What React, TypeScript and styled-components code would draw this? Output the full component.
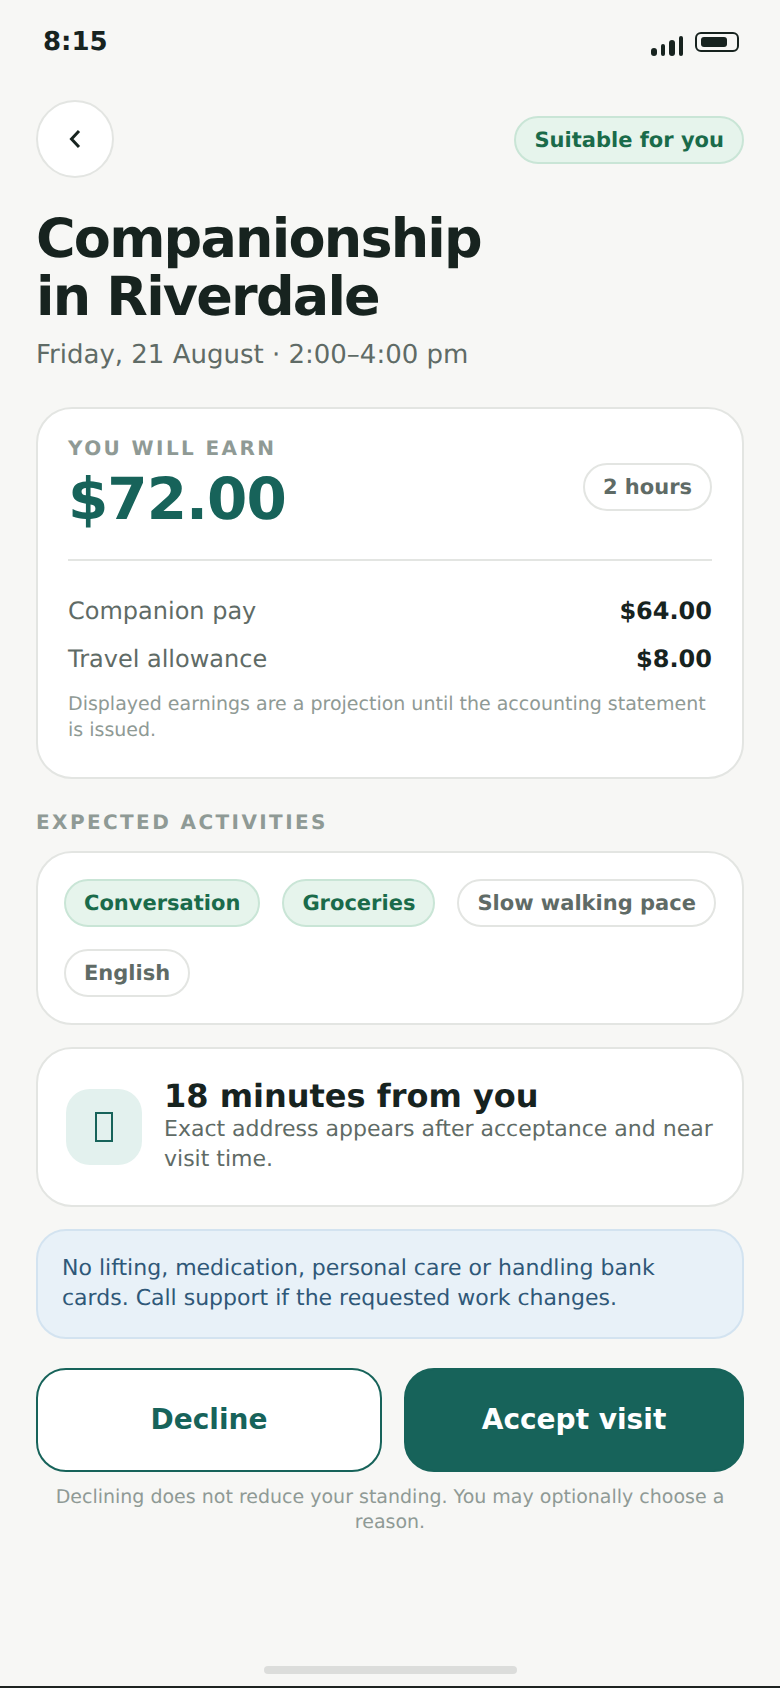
import React, { FC } from "react";
import styled, { createGlobalStyle } from "styled-components";

const GlobalStyle = createGlobalStyle`
  * {
    box-sizing: border-box;
  }
  html,
  body {
    margin: 0;
    padding: 0;
    background: #f7f7f5;
  }
  body {
    font-family: "DejaVu Sans", sans-serif;
    text-rendering: geometricPrecision;
  }
`;

const Screen = styled.div`
  width: 780px;
  height: 1688px;
  background: #f7f7f5;
  border-bottom: 2px solid #1e2321;
  display: flex;
  flex-direction: column;
  overflow: hidden;
`;

const StatusBar = styled.div`
  display: flex;
  justify-content: space-between;
  align-items: center;
  height: 82px;
  padding: 0 41px 0 43px;
`;
const Time = styled.div`
  padding-top: 2px;
  font-size: 26px;
  font-weight: 700;
  color: #17231f;
`;
const StatusIcons = styled.div`
  display: flex;
  align-items: center;
  gap: 12px;
  padding-top: 6px;
`;

const Content = styled.div`
  flex: 1;
  padding: 18px 36px 0;
  display: flex;
  flex-direction: column;
`;

const TopRow = styled.div`
  display: flex;
  justify-content: space-between;
  align-items: center;
`;
const BackButton = styled.button`
  width: 78px;
  height: 78px;
  border-radius: 50%;
  border: 2px solid #e3e5e2;
  background: #fff;
  padding: 0;
  display: flex;
  align-items: center;
  justify-content: center;
`;

interface PillProps {
  $tone: "green" | "plain";
}
const Pill = styled.span<PillProps>`
  display: inline-flex;
  align-items: center;
  height: 48px;
  padding: 0 18px 1px;
  border-radius: 24px;
  font-size: 21px;
  font-weight: 700;
  white-space: nowrap;
  color: ${(props) => (props.$tone === "green" ? "#1a6b4a" : "#5f6b66")};
  background: ${(props) => (props.$tone === "green" ? "#e6f4ec" : "#fff")};
  border: 2px solid
    ${(props) => (props.$tone === "green" ? "#c9e5d6" : "#e3e5e2")};
`;
const MatchPill = styled(Pill)`
  margin-top: 2px;
`;
const DurationPill = styled(Pill)`
  margin-top: 6px;
`;

const Title = styled.h1`
  margin: 32px 0 0;
  font-size: 54px;
  line-height: 58px;
  letter-spacing: -1.8px;
  font-weight: 700;
  color: #17231f;
`;
const Subtitle = styled.div`
  margin-top: 11px;
  font-size: 26px;
  line-height: 36px;
  color: #5f6b66;
`;

const Card = styled.section`
  background: #fff;
  border: 2px solid #e3e5e2;
  border-radius: 36px;
`;
const EarnCard = styled(Card)`
  margin-top: 34px;
  padding: 27px 30px 34px;
`;
const EarnHead = styled.div`
  display: flex;
  justify-content: space-between;
  align-items: center;
  padding-bottom: 27px;
  border-bottom: 2px solid #e3e5e2;
`;
const Eyebrow = styled.div`
  font-size: 20px;
  line-height: 24px;
  font-weight: 700;
  letter-spacing: 2.4px;
  color: #8f9a95;
`;
const Amount = styled.div`
  margin-top: 6px;
  font-size: 58px;
  line-height: 66px;
  letter-spacing: -1px;
  font-weight: 700;
  color: #17635a;
`;
const Lines = styled.div`
  margin-top: 32px;
  display: flex;
  flex-direction: column;
  gap: 12px;
`;
const Line = styled.div`
  display: flex;
  justify-content: space-between;
  font-size: 24px;
  line-height: 36px;
  color: #5f6b66;
`;
const LineValue = styled.span`
  font-weight: 700;
  color: #17231f;
`;
const Note = styled.p`
  margin: 14px 0 0;
  font-size: 19px;
  line-height: 26px;
  color: #8f9a95;
`;

const SectionLabel = styled(Eyebrow)`
  margin-top: 31px;
`;
const ChipsCard = styled(Card)`
  margin-top: 17px;
  padding: 26px;
  display: flex;
  flex-wrap: wrap;
  gap: 22px;
`;

const DistanceCard = styled(Card)`
  margin-top: 22px;
  padding: 30px 28px 30px;
  display: flex;
  align-items: center;
  gap: 22px;
`;
const IconTile = styled.div`
  flex: none;
  width: 76px;
  height: 76px;
  border-radius: 24px;
  background: #e3f1ee;
  display: flex;
  align-items: center;
  justify-content: center;
`;
const MissingGlyph = styled.span`
  display: block;
  width: 18px;
  height: 30px;
  border: 2px solid #17635a;
`;
const DistanceTitle = styled.div`
  margin-bottom: 2px;
  font-size: 32px;
  line-height: 34px;
  font-weight: 700;
  color: #17231f;
`;
const DistanceText = styled.div`
  font-size: 22px;
  line-height: 30px;
  color: #5f6b66;
`;

const Notice = styled.div`
  margin-top: 22px;
  padding: 23px 24px;
  background: #e8f1f8;
  border: 2px solid #d3e3f0;
  border-radius: 30px;
  font-size: 22px;
  line-height: 30px;
  color: #2f5878;
`;

const Actions = styled.div`
  margin-top: 29px;
  display: flex;
  gap: 22px;
`;
interface ActionProps {
  $primary?: boolean;
}
const Action = styled.button<ActionProps>`
  flex: ${(props) => (props.$primary ? "0 0 340px" : "0 0 346px")};
  height: 104px;
  border-radius: 30px;
  border: 2px solid #17635a;
  padding: 0 0 2px;
  font-family: inherit;
  font-size: 28px;
  font-weight: 700;
  color: ${(props) => (props.$primary ? "#fff" : "#17635a")};
  background: ${(props) => (props.$primary ? "#17635a" : "#fff")};
`;
const Footnote = styled.p`
  margin: 13px 0 0;
  font-size: 19px;
  line-height: 25px;
  text-align: center;
  color: #8f9a95;
`;

const HomeBar = styled.div`
  align-self: center;
  width: 253px;
  height: 8px;
  border-radius: 4px;
  background: #dcdddb;
  margin-bottom: 12px;
`;

const SignalIcon: FC = () => (
  <svg width="32" height="24" viewBox="0 0 32 24" fill="#17231f">
    <rect x="0" y="16" width="6" height="8" rx="3" />
    <rect x="10" y="12" width="4" height="12" rx="2" />
    <rect x="18" y="8" width="6" height="16" rx="3" />
    <rect x="28" y="4" width="4" height="20" rx="2" />
  </svg>
);

const BatteryIcon: FC = () => (
  <svg width="44" height="24" viewBox="0 0 44 24">
    <rect x="1" y="1" width="42" height="18" rx="5" fill="none" stroke="#17231f" strokeWidth="2" />
    <rect x="6" y="5" width="26" height="10" rx="3" fill="#17231f" />
  </svg>
);

const App: FC = () => {
  return (
    <>
      <GlobalStyle />
      <Screen>
        <StatusBar>
          <Time>8:15</Time>
          <StatusIcons>
            <SignalIcon />
            <BatteryIcon />
          </StatusIcons>
        </StatusBar>
        <Content>
          <TopRow>
            <BackButton aria-label="Back">
              <svg width="14" height="20" viewBox="0 0 14 20" fill="none">
                <path d="M11 2 3.5 10 11 18" stroke="#17231f" strokeWidth="3" />
              </svg>
            </BackButton>
            <MatchPill $tone="green">Suitable for you</MatchPill>
          </TopRow>
          <Title>
            Companionship
            <br />
            in Riverdale
          </Title>
          <Subtitle>Friday, 21 August · 2:00–4:00 pm</Subtitle>

          <EarnCard>
            <EarnHead>
              <div>
                <Eyebrow>YOU WILL EARN</Eyebrow>
                <Amount>$72.00</Amount>
              </div>
              <DurationPill $tone="plain">2 hours</DurationPill>
            </EarnHead>
            <Lines>
              <Line>
                <span>Companion pay</span>
                <LineValue>$64.00</LineValue>
              </Line>
              <Line>
                <span>Travel allowance</span>
                <LineValue>$8.00</LineValue>
              </Line>
            </Lines>
            <Note>Displayed earnings are a projection until the accounting statement is issued.</Note>
          </EarnCard>

          <SectionLabel>EXPECTED ACTIVITIES</SectionLabel>
          <ChipsCard>
            <Pill $tone="green">Conversation</Pill>
            <Pill $tone="green">Groceries</Pill>
            <Pill $tone="plain">Slow walking pace</Pill>
            <Pill $tone="plain">English</Pill>
          </ChipsCard>

          <DistanceCard>
            <IconTile>
              <MissingGlyph />
            </IconTile>
            <div>
              <DistanceTitle>18 minutes from you</DistanceTitle>
              <DistanceText>Exact address appears after acceptance and near visit time.</DistanceText>
            </div>
          </DistanceCard>

          <Notice>No lifting, medication, personal care or handling bank cards. Call support if the requested work changes.</Notice>

          <Actions>
            <Action>Decline</Action>
            <Action $primary>Accept visit</Action>
          </Actions>
          <Footnote>Declining does not reduce your standing. You may optionally choose a reason.</Footnote>
        </Content>
        <HomeBar />
      </Screen>
    </>
  );
};

export default App;
